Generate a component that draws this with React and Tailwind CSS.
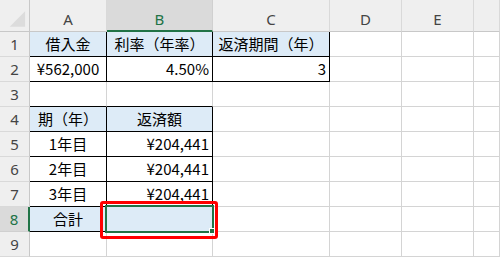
import React from "react";

// spreadsheet grid: row-header column + A..E + a partial column at the right edge
const colTemplate = "grid-cols-[30px_77px_106px_117px_72px_72px_26px]";
const rowTemplate = "grid-rows-[32px_repeat(9,25px)]";

const cellFont = { fontFamily: '"Noto Sans CJK JP", "Noto Sans", sans-serif' };
const headFont = { fontFamily: '"Noto Sans", "Liberation Sans", sans-serif' };

const columns = ["A", "B", "C", "D", "E", ""];

// a = align (c/r), f = blue fill, r/b = black right / bottom border, s = active cell
const rows = [
  [
    { v: "借入金", a: "c", f: 1, r: 1, b: 1 },
    { v: "利率（年率）", a: "c", f: 1, r: 1, b: 1 },
    { v: "返済期間（年）", a: "c", f: 1, r: 1, b: 1 },
    {}, {}, {},
  ],
  [
    { v: "¥562,000", a: "c", r: 1, b: 1 },
    { v: "4.50%", a: "r", r: 1, b: 1 },
    { v: "3", a: "r", r: 1, b: 1 },
    {}, {}, {},
  ],
  [{ b: 1 }, { b: 1 }, {}, {}, {}, {}],
  [
    { v: "期（年）", a: "c", f: 1, r: 1, b: 1 },
    { v: "返済額", a: "c", f: 1, r: 1, b: 1 },
    {}, {}, {}, {},
  ],
  [
    { v: "1年目", a: "c", r: 1, b: 1 },
    { v: "¥204,441", a: "r", r: 1, b: 1 },
    {}, {}, {}, {},
  ],
  [
    { v: "2年目", a: "c", r: 1, b: 1 },
    { v: "¥204,441", a: "r", r: 1, b: 1 },
    {}, {}, {}, {},
  ],
  [
    { v: "3年目", a: "c", r: 1, b: 1 },
    { v: "¥204,441", a: "r", r: 1, b: 1 },
    {}, {}, {}, {},
  ],
  [
    { v: "合計", a: "c", f: 1, r: 1, b: 1 },
    { f: 1, r: 1, b: 1, s: 1 },
    {}, {}, {}, {},
  ],
  [{}, {}, {}, {}, {}, {}],
];

const Selection = () => (
  <>
    {/* green active-cell frame with fill handle */}
    <div className="absolute -left-[2px] -top-[2px] -right-[2px] -bottom-[2px] border-2 border-[#217346]" />
    <div className="absolute -right-[3px] -bottom-[3px] w-[6px] h-[6px] bg-[#217346] border border-white" />
    {/* red highlight frame */}
    <div className="absolute -left-[7px] -top-[6px] -right-[6px] -bottom-[8px] border-[3px] border-[#ff0000] rounded-[3px]" />
  </>
);

const Cell = ({ c }) => (
  <div
    className={[
      "relative flex items-center whitespace-nowrap border-r border-b text-[15px] text-black",
      c.s ? "z-10 overflow-visible" : "overflow-hidden",
      c.r ? "border-r-black" : "border-r-[#d4d4d4]",
      c.b ? "border-b-black" : "border-b-[#d4d4d4]",
      c.f ? "bg-[#ddebf7]" : "bg-white",
      c.a === "r" ? "justify-end pr-[3px]" : "justify-center",
    ].join(" ")}
    style={cellFont}
  >
    {c.v}
    {c.s && <Selection />}
  </div>
);

export default function App() {
  return (
    <div className="w-[500px] h-[257px] overflow-hidden bg-white select-none">
      <div className={`grid ${colTemplate} ${rowTemplate}`}>
        {/* corner */}
        <div className="flex items-center justify-center bg-[#efefef] border-r border-b border-[#c8c8c8]">
          <svg width="30" height="32" viewBox="0 0 30 32">
            <polygon points="26,11 26,27 10,27" fill="#dcdcdc" />
          </svg>
        </div>
        {columns.map((col) => (
          <div
            key={col || "f"}
            className={
              col === "B"
                ? "flex items-center justify-center pt-2 bg-[#dadada] border-r border-r-[#d0d0d0] border-b-2 border-b-[#217346] text-[15px] text-[#217346]"
                : "flex items-center justify-center pt-2 bg-[#efefef] border-r border-r-[#d9d9d9] border-b border-b-[#c8c8c8] text-[15px] text-[#444]"
            }
            style={headFont}
          >
            {col}
          </div>
        ))}

        {rows.map((row, i) => (
          <React.Fragment key={i}>
            <div
              className={
                i === 7
                  ? "flex items-center justify-center bg-[#dadada] border-r-2 border-r-[#217346] border-b border-b-[#d0d0d0] text-[15px] text-[#217346]"
                  : "flex items-center justify-center bg-[#efefef] border-r border-r-[#c8c8c8] border-b border-b-[#d9d9d9] text-[15px] text-[#444]"
              }
              style={headFont}
            >
              {i + 1}
            </div>
            {row.map((c, j) => (
              <Cell key={j} c={c} />
            ))}
          </React.Fragment>
        ))}
      </div>
    </div>
  );
}
